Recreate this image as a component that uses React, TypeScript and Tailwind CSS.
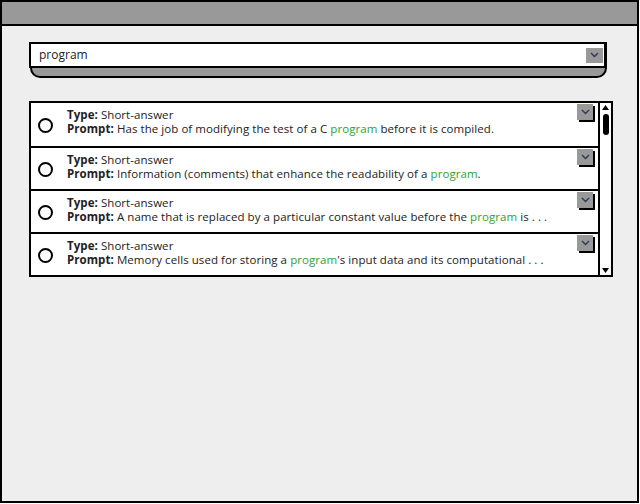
import React from 'react';

const FONT = { fontFamily: '"Open Sans", Lato, sans-serif' };

const rows = [
    { before: 'Has the job of modifying the test of a C ', after: ' before it is compiled.' },
    { before: 'Information (comments) that enhance the readability of a ', after: '.' },
    { before: 'A name that is replaced by a particular constant value before the ', after: ' is . . .' },
    { before: 'Memory cells used for storing a ', after: "'s input data and its computational . . ." },
];

const Chevron = () => (
    <svg width="9" height="6" viewBox="0 0 9 6" fill="none">
        <path d="M1 1 L4.5 4.5 L8 1" stroke="#2b3a55" strokeWidth="1.4" />
    </svg>
);

const App = () => {
    return (
        <div className="w-[640px] h-[504px] bg-white text-[#222]" style={FONT}>
            <div className="w-[639px] h-[503px] border-2 border-black bg-[#eeeeee] flex flex-col">
                {/* Title bar */}
                <div className="h-[24px] bg-[#999999] border-b-2 border-black" />

                <div className="pl-[27px] pt-[16px]">
                    {/* Search dropdown */}
                    <div className="w-[578px]">
                        <div className="relative z-10 h-[26px] bg-white border-2 border-black border-r-[3px] flex items-center">
                            <span className="pl-[8px] text-[12px] flex-1">program</span>
                            <div className="w-[17px] h-[15px] mr-[1px] bg-[#999999] flex items-center justify-center">
                                <Chevron />
                            </div>
                        </div>
                        <div className="h-[12px] -mt-[2px] ml-[1px] bg-[#999999] border-2 border-t-0 border-black rounded-b-[10px]" />
                    </div>

                    {/* Results list */}
                    <div className="mt-[23px] w-[584px] border-2 border-black bg-white flex">
                        <div className="flex-1 flex flex-col">
                            {rows.map((r, i) => (
                                <div
                                    key={i}
                                    className={`relative h-[43px] flex ${i > 0 ? 'border-t-2 border-black' : ''}`}
                                >
                                    <div className="pl-[7px] pr-[14px] flex items-center pt-[2px]">
                                        <div className="w-[15px] h-[15px] rounded-full border-2 border-black" />
                                    </div>
                                    <div className="pt-[5px] text-[11.5px] tracking-[0.06px] leading-[14px] whitespace-nowrap">
                                        <div>
                                            <span className="font-bold">Type:</span> Short-answer
                                        </div>
                                        <div>
                                            <span className="font-bold">Prompt:</span> {r.before}
                                            <span className="text-[#2ea32e]">program</span>
                                            {r.after}
                                        </div>
                                    </div>
                                    <div className="absolute right-[5px] top-[1px] w-[16px] h-[16px] bg-[#999999] shadow-[2px_2px_0_#000] flex items-center justify-center">
                                        <Chevron />
                                    </div>
                                </div>
                            ))}
                        </div>

                        {/* Scrollbar */}
                        <div className="w-[13px] border-l-2 border-black flex flex-col items-center py-[1px]">
                            <svg width="9" height="7" viewBox="0 0 9 7">
                                <path d="M4.5 1 L8 6 L1 6 Z" fill="#000" />
                            </svg>
                            <div className="w-[6px] h-[21px] mt-[3px] bg-black rounded-full" />
                            <div className="flex-1" />
                            <svg width="9" height="7" viewBox="0 0 9 7">
                                <path d="M1 1 L8 1 L4.5 6 Z" fill="#000" />
                            </svg>
                        </div>
                    </div>
                </div>
            </div>
        </div>
    );
};

export default App;
